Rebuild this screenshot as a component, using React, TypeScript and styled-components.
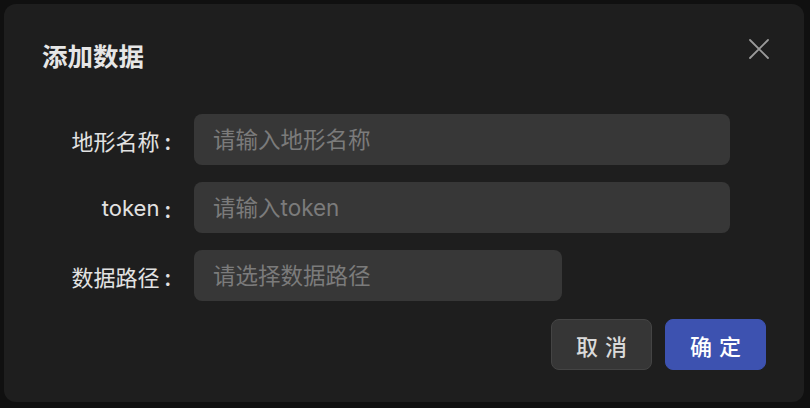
import React from "react";
import styled, { createGlobalStyle } from "styled-components";

const GlobalStyle = createGlobalStyle`
  html, body {
    margin: 0;
    padding: 0;
    background: #101010;
  }
  body {
    font-family: "Inter", "Noto Sans CJK SC", "Noto Sans", sans-serif;
  }
  * { box-sizing: border-box; }
`;

const Page = styled.div`
  width: 810px;
  height: 408px;
  padding: 4px 6px 6px 4px;
  background: #101010;
`;

const Dialog = styled.div`
  width: 800px;
  height: 398px;
  background: #1e1e1e;
  border-radius: 12px;
  padding: 33px 38px 32px 38px;
  display: flex;
  flex-direction: column;
`;

const Header = styled.div`
  display: flex;
  justify-content: space-between;
  align-items: flex-start;
`;

const Title = styled.h2`
  margin: 0;
  font-size: 25.5px;
  line-height: 36px;
  font-weight: 700;
  color: #e6e6e6;
  font-family: "Noto Sans CJK SC", sans-serif;
`;

const CloseButton = styled.button`
  width: 20px;
  height: 20px;
  padding: 0;
  margin: 2px -3px 0 0;
  border: none;
  background: transparent;
  color: #9a9a9a;
  cursor: pointer;
  display: flex;
  align-items: center;
  justify-content: center;
`;

const Form = styled.div`
  margin-top: 41px;
  display: flex;
  flex-direction: column;
  gap: 17px;
`;

const Row = styled.div`
  display: grid;
  grid-template-columns: 129px 1fr;
  column-gap: 23px;
  align-items: center;
`;

const Label = styled.label`
  display: flex;
  justify-content: flex-end;
  align-items: center;
  font-size: 22px;
  color: #e2e2e2;
  white-space: nowrap;
`;

const Colon = styled.span`
  margin-left: 5px;
  font-family: "Noto Sans CJK SC", sans-serif;
  font-weight: 500;
`;

const Input = styled.input<{ $width: number }>`
  width: ${(p) => p.$width}px;
  height: 51px;
  border: none;
  outline: none;
  border-radius: 8px;
  background: #373737;
  color: #e2e2e2;
  padding: 0 19px;
  font-size: 22.5px;
  font-family: "Inter", "Noto Sans CJK SC", sans-serif;
  &::placeholder {
    color: #7b7b7b;
  }
`;

const Footer = styled.div`
  margin-top: 18px;
  display: flex;
  justify-content: flex-end;
  gap: 13px;
`;

const Button = styled.button<{ $primary?: boolean }>`
  width: 101px;
  height: 51px;
  border-radius: 8px;
  border: 1px solid ${(p) => (p.$primary ? "#3d52b0" : "#444444")};
  background: ${(p) => (p.$primary ? "#3d52b0" : "#363636")};
  color: ${(p) => (p.$primary ? "#ffffff" : "#dadada")};
  font-family: "Noto Sans CJK SC", sans-serif;
  font-size: 22px;
  font-weight: 500;
  letter-spacing: 7px;
  padding: 0 0 0 7px;
  cursor: pointer;
  white-space: nowrap;
`;

const fields = [
  { label: "地形名称", placeholder: "请输入地形名称", width: 536 },
  { label: "token", placeholder: "请输入token", width: 536 },
  { label: "数据路径", placeholder: "请选择数据路径", width: 368 },
];

export default function App() {
  return (
    <>
      <GlobalStyle />
      <Page>
        <Dialog>
          <Header>
            <Title>添加数据</Title>
            <CloseButton aria-label="close">
              <svg width="20" height="20" viewBox="0 0 20 20" fill="none">
                <path d="M1 1L19 19M19 1L1 19" stroke="currentColor" strokeWidth="1.8" strokeLinecap="round" />
              </svg>
            </CloseButton>
          </Header>
          <Form>
            {fields.map((f) => (
              <Row key={f.label}>
                <Label>
                  {f.label}
                  <Colon>:</Colon>
                </Label>
                <Input $width={f.width} placeholder={f.placeholder} />
              </Row>
            ))}
          </Form>
          <Footer>
            <Button>取消</Button>
            <Button $primary>确定</Button>
          </Footer>
        </Dialog>
      </Page>
    </>
  );
}
